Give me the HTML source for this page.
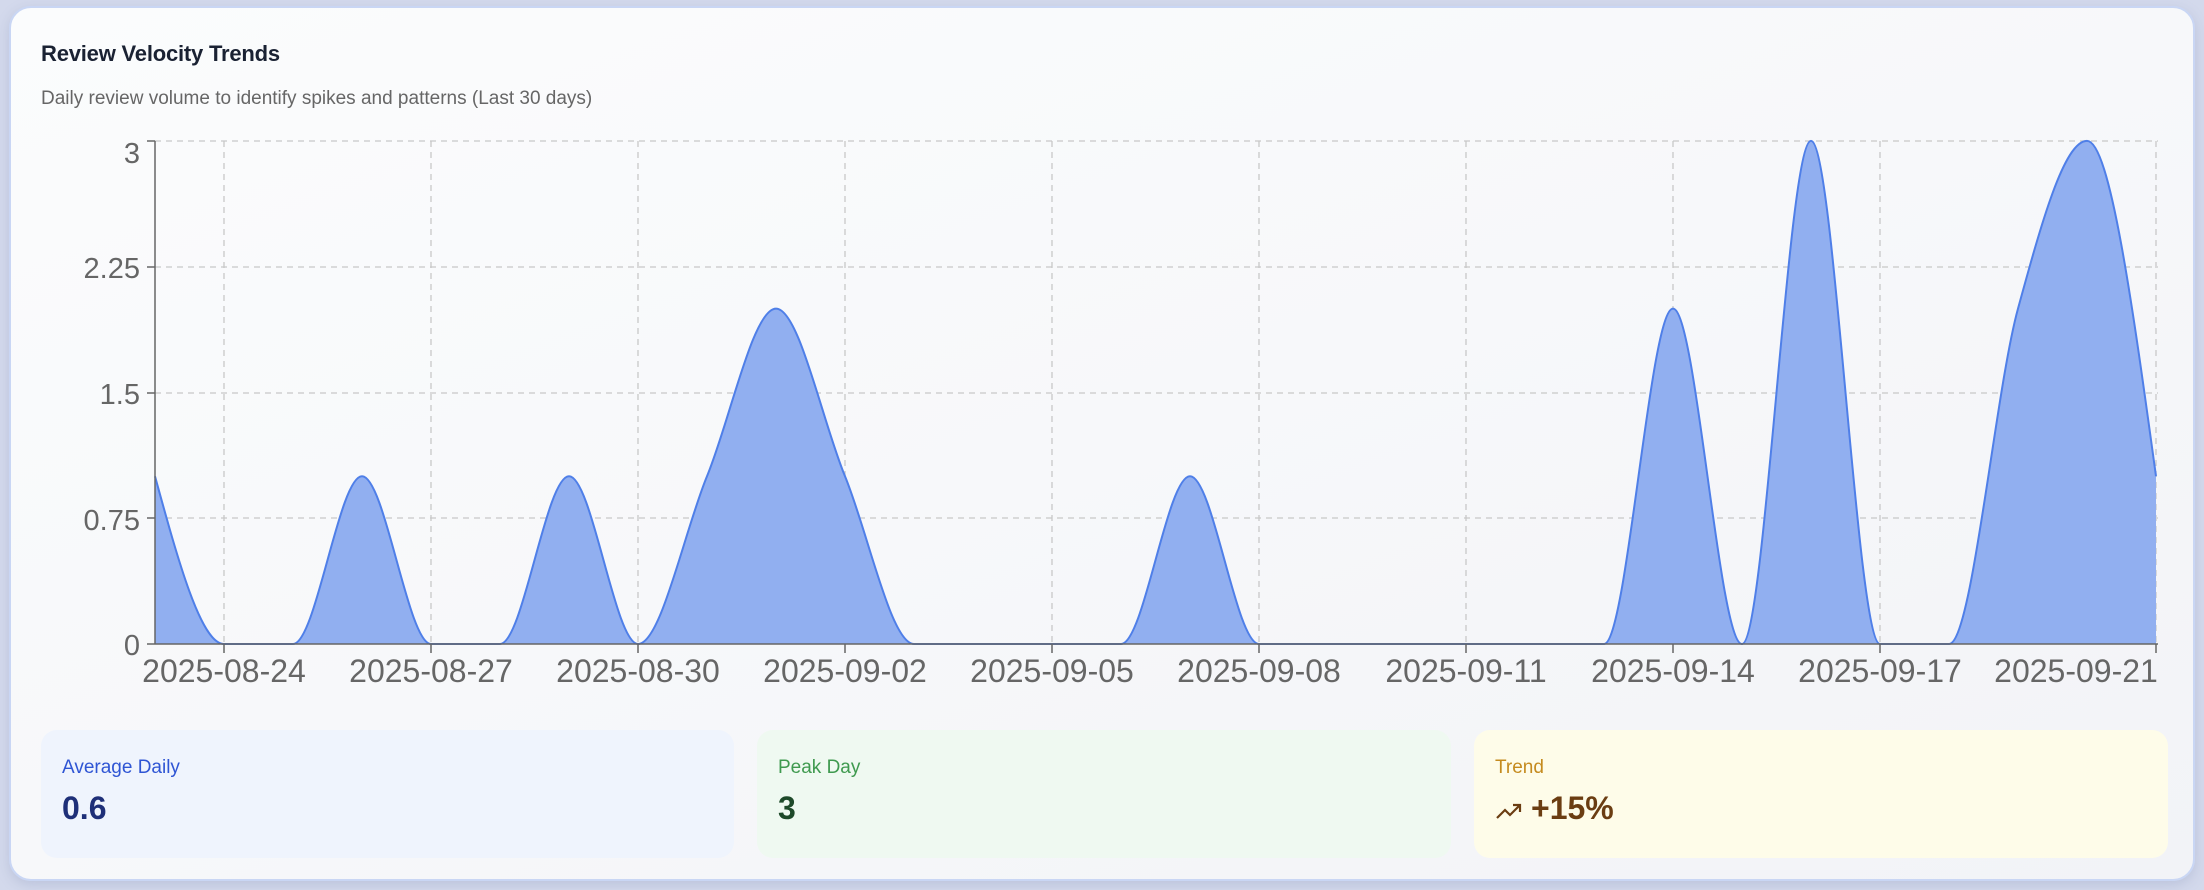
<!DOCTYPE html>
<html><head><meta charset="utf-8"><style>
*{margin:0;padding:0;box-sizing:border-box}
body{width:2204px;height:890px;background:#d3d9ec;font-family:"Liberation Sans",sans-serif;position:relative;overflow:hidden}
.card{position:absolute;left:9px;top:6px;width:2186px;height:875px;border-radius:22px;background:linear-gradient(160deg,#fbfcfd 0%,#f7f8fa 50%,#f2f3f7 100%);border:2px solid #c9d6f4;box-shadow:0 4px 12px rgba(120,130,170,.25)}
h1{position:absolute;left:30px;top:33px;font-size:22px;font-weight:bold;color:#1a2233;letter-spacing:-0.2px}
.sub{position:absolute;left:30px;top:80px;font-size:19px;color:#666}
svg{position:absolute;left:0;top:0}
.box{position:absolute;top:722px;height:128px;border-radius:16px}
.box .l{position:absolute;left:21px;top:27px;font-size:19px}
.box .v{position:absolute;left:21px;top:60px;font-size:32px;font-weight:bold}
</style></head><body>
<div class="card">
<h1>Review Velocity Trends</h1>
<div class="sub">Daily review volume to identify spikes and patterns (Last 30 days)</div>
<div class="box" style="left:30px;width:693px;background:#eff4fd"><div class="l" style="color:#2f55d4">Average Daily</div><div class="v" style="color:#1e2f78">0.6</div></div>
<div class="box" style="left:746px;width:694px;background:#eff9f1"><div class="l" style="color:#3f9a4f">Peak Day</div><div class="v" style="color:#1e4a2a">3</div></div>
<div class="box" style="left:1463px;width:694px;background:#fefce9"><div class="l" style="color:#c58b1f">Trend</div><div class="v" style="color:#6b3d12;left:21px"><svg width="28" height="20" viewBox="0 0 28 20" style="position:relative;display:inline-block;vertical-align:middle;margin-right:8px"><path d="M2 17 L10 9 L15 14 L25 4 M18 4 H25 V11" fill="none" stroke="#6b3d12" stroke-width="2.2"/></svg>+15%</div></div>
</div>
<svg width="2204" height="890" id="ch" font-family="Liberation Sans, sans-serif">
<g stroke="#c8c8c8" stroke-dasharray="6 5" stroke-width="1.3" fill="none" id="grid"></g>
<path id="area" fill="#91aff0" stroke="none"/>
<path id="line" fill="none" stroke="#4f7fe8" stroke-width="2"/>
<g stroke="#666" stroke-width="1.5" id="axes"></g>
<g fill="#666" font-size="29" id="labels">
<text x="140" y="163" text-anchor="end">3</text>
<text x="140" y="278" text-anchor="end">2.25</text>
<text x="140" y="404" text-anchor="end">1.5</text>
<text x="140" y="530" text-anchor="end">0.75</text>
<text x="140" y="655" text-anchor="end">0</text>
</g>
<g fill="#666" font-size="32" text-anchor="middle">
<text x="224" y="682">2025-08-24</text>
<text x="431" y="682">2025-08-27</text>
<text x="638" y="682">2025-08-30</text>
<text x="845" y="682">2025-09-02</text>
<text x="1052" y="682">2025-09-05</text>
<text x="1259" y="682">2025-09-08</text>
<text x="1466" y="682">2025-09-11</text>
<text x="1673" y="682">2025-09-14</text>
<text x="1880" y="682">2025-09-17</text>
<text x="2076" y="682">2025-09-21</text>
</g>
</svg>
<script>
var X0=155,DW=69.0,Y0=644,YU=167.7;
var d=[1,0,0,1,0,0,1,0,1,2,1,0,0,0,0,1,0,0,0,0,0,0,2,0,3,0,0,2,3,1];
var P=d.map(function(v,i){return [X0+DW*i,Y0-YU*v]});
var n=P.length,s=[],t=[];
for(var i=0;i<n-1;i++)s.push((P[i+1][1]-P[i][1])/DW);
function sg(x){return x<0?-1:1}
for(var i=1;i<n-1;i++){var s0=s[i-1],s1=s[i],p=(s0+s1)/2;t[i]=(sg(s0)+sg(s1))*Math.min(Math.abs(s0),Math.abs(s1),0.5*Math.abs(p))||0;}
t[0]=(3*s[0]-t[1])/2;t[n-1]=(3*s[n-2]-t[n-2])/2;
var dp="M"+P[0][0]+","+P[0][1];
for(var i=0;i<n-1;i++){var dx=DW/3;dp+=" C"+(P[i][0]+dx)+","+(P[i][1]+dx*t[i])+" "+(P[i+1][0]-dx)+","+(P[i+1][1]-dx*t[i+1])+" "+P[i+1][0]+","+P[i+1][1];}
document.getElementById('line').setAttribute('d',dp);
document.getElementById('area').setAttribute('d',dp+" L"+P[n-1][0]+","+Y0+" L"+X0+","+Y0+"Z");
var g=document.getElementById('grid'),h="";
[141,267,393,518].forEach(function(y){h+='<line x1="155" x2="2158" y1="'+y+'" y2="'+y+'"/>'});
[1,4,7,10,13,16,19,22,25,29].forEach(function(k){var x=X0+DW*k;h+='<line x1="'+x+'" x2="'+x+'" y1="141" y2="644"/>'});
g.innerHTML=h;
var a="",ax=document.getElementById('axes');
a+='<line x1="155" x2="155" y1="141" y2="644"/><line x1="155" x2="2158" y1="644" y2="644"/>';
[141,267,393,518,644].forEach(function(y){a+='<line x1="147" x2="155" y1="'+y+'" y2="'+y+'"/>'});
[1,4,7,10,13,16,19,22,25,29].forEach(function(k){var x=X0+DW*k;a+='<line x1="'+x+'" x2="'+x+'" y1="644" y2="653"/>'});
ax.innerHTML=a;
</script>
</body></html>
